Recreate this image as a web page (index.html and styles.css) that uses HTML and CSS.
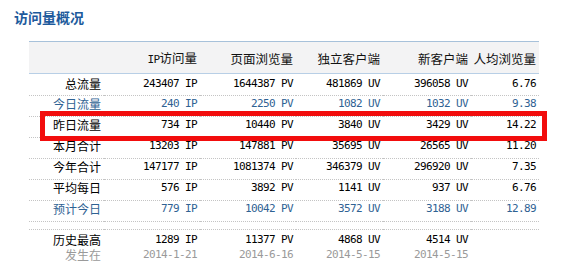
FILE: index.html
```html
<!DOCTYPE html>
<html lang="zh">
<head>
<meta charset="utf-8">
<link rel="stylesheet" href="styles.css">
</head>
<body>
<h2 class="title">访问量概况</h2>
<div class="wrap">
<table class="stats">
<colgroup>
<col class="c0"><col class="c1"><col class="c2"><col class="c3"><col class="c4"><col class="c5">
</colgroup>
<thead>
<tr><th></th><th><span class="m">IP</span>访问量</th><th>页面浏览量</th><th>独立客户端</th><th>新客户端</th><th>人均浏览量</th></tr>
</thead>
<tbody>
<tr class="first"><td class="lb">总流量</td><td>243407 IP</td><td>1644387 PV</td><td>481869 UV</td><td>396058 UV</td><td>6.76</td></tr>
<tr class="blue"><td class="lb">今日流量</td><td>240 IP</td><td>2250 PV</td><td>1082 UV</td><td>1032 UV</td><td>9.38</td></tr>
<tr><td class="lb">昨日流量</td><td>734 IP</td><td>10440 PV</td><td>3840 UV</td><td>3429 UV</td><td>14.22</td></tr>
<tr><td class="lb">本月合计</td><td>13203 IP</td><td>147881 PV</td><td>35695 UV</td><td>26565 UV</td><td>11.20</td></tr>
<tr><td class="lb">今年合计</td><td>147177 IP</td><td>1081374 PV</td><td>346379 UV</td><td>296920 UV</td><td>7.35</td></tr>
<tr><td class="lb">平均每日</td><td>576 IP</td><td>3892 PV</td><td>1141 UV</td><td>937 UV</td><td>6.76</td></tr>
<tr class="blue"><td class="lb">预计今日</td><td>779 IP</td><td>10042 PV</td><td>3572 UV</td><td>3188 UV</td><td>12.89</td></tr>
<tr class="spacer"><td colspan="6"></td></tr>
<tr class="record"><td class="lb"><div>历史最高</div><div class="gray">发生在</div></td><td><div>1289 IP</div><div class="gray">2014-1-21</div></td><td><div>11377 PV</div><div class="gray">2014-6-16</div></td><td><div>4868 UV</div><div class="gray">2014-5-15</div></td><td><div>4514 UV</div><div class="gray">2014-5-15</div></td><td></td></tr>
</tbody>
</table>
<div class="highlight"></div>
</div>
</body>
</html>
```
FILE: styles.css
```css
html, body {
  margin: 0;
  padding: 0;
  background: #fff;
}
body {
  font-family: "Noto Sans CJK SC", "DejaVu Sans Mono", monospace;
  font-size: 12px;
  color: #000;
}
.title {
  margin: 0;
  padding: 9px 0 0 14px;
  height: 32px;
  box-sizing: border-box;
  font-size: 14px;
  line-height: 16px;
  font-weight: bold;
  color: #1d5a9c;
}
.wrap {
  position: relative;
  margin-left: 29px;
  margin-top: 9px;
  width: 510px;
}
.stats {
  width: 510px;
  border-collapse: collapse;
  table-layout: fixed;
}
.c0 { width: 75px; }
.c1 { width: 96px; }
.c2 { width: 96px; }
.c3 { width: 87px; }
.c4 { width: 88px; }
.c5 { width: 68px; }
.stats th {
  background: #f3f3f4;
  border-top: 1px solid #a7c1da;
  border-bottom: 1px solid #b8cfe6;
  padding: 2px 3px 0 0;
  line-height: 27px;
  text-align: right;
  font-weight: normal;
  font-size: 12.5px;
  color: #111;
  white-space: nowrap;
}
.m, .stats td {
  font-family: "DejaVu Sans Mono", monospace;
}
.stats td {
  font-size: 11px;
  letter-spacing: -0.62px;
  text-align: right;
  padding: 0 3px 4px 0;
  line-height: 16px;
  border-bottom: 1px dotted #c4c4c4;
  white-space: nowrap;
  vertical-align: top;
}
.m { font-size: 11px; letter-spacing: -0.62px; }
.stats td.lb {
  font-family: "Noto Sans CJK SC", sans-serif;
  font-size: 12px;
  letter-spacing: 0;
}
.stats tr.first td { padding-top: 2px; padding-bottom: 3px; }
.stats tr.blue td { color: #2f6293; }
.stats tr.spacer td { line-height: 7px; height: 7px; padding: 0; }
.stats tr.record td {
  line-height: 15px;
  padding-top: 2px;
  padding-bottom: 2px;
}
.gray { color: #9a9a9a; }
.highlight {
  position: absolute;
  left: 11px;
  top: 70px;
  width: 507px;
  height: 30px;
  border: 5px solid #f20d0d;
  box-sizing: border-box;
}
```
